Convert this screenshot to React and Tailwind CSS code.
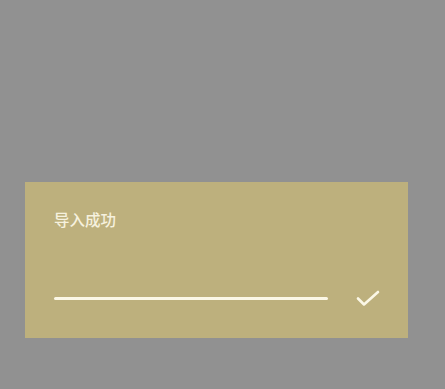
import React from 'react';

const App = () => {
  return (
    <div
      className="w-[445px] h-[389px] bg-[#919191] pt-[182px] pl-[25px]"
      style={{ fontFamily: '"Noto Sans CJK SC", "Noto Sans", sans-serif' }}
    >
      <div className="w-[383px] h-[156px] bg-[#bdb07d] flex flex-col pl-[29px] pr-[28px] pt-[27px] pb-[32px]">
        <p className="text-[15.5px] leading-[20px] font-medium text-[#f6f1de]">导入成功</p>
        <div className="mt-auto flex items-center h-[16px]">
          <div className="w-[274px] h-[3px] bg-[#fbf7e6] rounded-full" />
          <svg className="ml-auto" width="24" height="17" viewBox="0 0 24 17" fill="none">
            <polyline
              points="2,8.5 8,14.5 22,2"
              stroke="#fbf7e6"
              strokeWidth="2.6"
              strokeLinecap="round"
              strokeLinejoin="round"
            />
          </svg>
        </div>
      </div>
    </div>
  );
};

export default App;
